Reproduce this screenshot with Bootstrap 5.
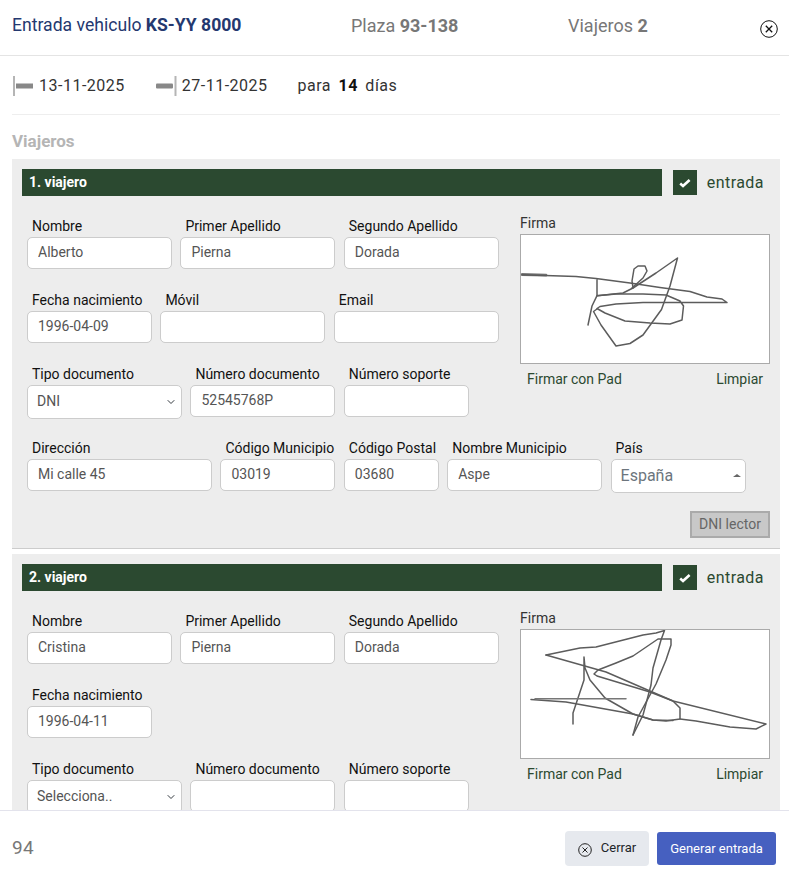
<!DOCTYPE html>
<html lang="es">
<head>
<meta charset="utf-8">
<title>Entrada vehiculo</title>
<link href="https://cdn.jsdelivr.net/npm/bootstrap@5.3.0/dist/css/bootstrap.min.css" rel="stylesheet">
<style>
html,body{height:100%;overflow:hidden;background:#fff}
body{font-family:Roboto,"Liberation Sans",sans-serif;font-size:14px;color:#212529}
.ventana{height:880px;width:789px;border:0;border-radius:0}
.cabecera{height:56px;padding:0 0 4px 12px;border-bottom:1px solid #e4e4e4;font-size:18px;flex:none}
.cab-titulo{width:339px;color:#24386f;font-size:17.6px}
.cab-plaza{width:217px;color:#777}
.cab-viajeros{width:192px;color:#777}
.cab-cerrar{width:18px;background:none;border:0;padding:0;line-height:0;margin-top:6px}
.cuerpo{flex:1;overflow:hidden;padding:0 9px 0 12px;min-height:0}
.fechas{height:59px;border-bottom:1px solid #eee;font-size:16px;letter-spacing:.5px;color:#333;padding-top:1px}
.fecha-a{margin-right:31px}
.fecha-b{margin-right:30px;margin-left:5px}
.marca{display:block;width:21px;height:20px;flex:none;margin-right:6px}
.marca-fin{margin-right:0}
.dias b{margin:0 3px;color:#111}
.rotulo{font-size:17px;font-weight:700;color:#b5b5b5;margin:16px 0 7px;line-height:21px}
.viajero{background:#ededed;padding:10px;border-bottom:1px solid #ccc;margin-bottom:5px}
.barra-fila{height:27px;padding-right:6px}
.barra{flex:1;background:#2b4930;color:#fff;font-weight:700;font-size:14px;height:27px;line-height:27px;padding-left:7px;margin-right:11px}
.marcador{width:24px;height:25px;background:#2b4930;flex:none;margin-right:10px;display:flex;align-items:center;justify-content:center}
.entrada-txt{font-size:16px;color:#2b4930;letter-spacing:.45px}
.zona{margin-top:20px}
.izq{width:477px;padding-left:5px}
.firma{width:250px;margin-left:21px;margin-top:-3px}
.firma-tit{line-height:20px;color:#333;height:20px;margin-bottom:1px}
.lienzo{display:block;width:250px;height:130px;background:#fff;border:1px solid #aaa}
.firma-acc{padding:0 7px;margin-top:6px;color:#2b4930;line-height:18px}
.fila{display:flex;gap:8.4px;height:74px;align-items:flex-start}
.fila-fin{height:73px;padding-left:5px}
.etq{display:block;margin:0 0 0 5px;line-height:21px;height:21px;white-space:nowrap;color:#111}
.w95{width:95px}.w115{width:115px}.w125{width:125px}.w135{width:135px}.w145{width:145px}.w155{width:155px}.w165{width:165px}.w185{width:185px}
.campo{height:32px;font-size:14px;color:#555;padding:0 10px 2px;border-color:#ccc;border-radius:5px;background-color:#fff}
.campo-sel{height:34px;font-size:14px;color:#555;padding:0 24px 1px 9px;border-color:#ccc;border-radius:5px;background-position:right 5px center;background-size:10px 8px}
.pais-sel{height:34px;font-size:16px;color:#6c757d;padding:0 24px 0 9px;border-color:#ccc;border-radius:5px;background-image:linear-gradient(#fff,#fff);background-size:0 0}
.pais-caja{position:relative}
.pais-flecha{position:absolute;right:5px;top:36px;width:0;height:0;border:4px solid transparent;border-top:0;border-bottom:3px solid #666;pointer-events:none}
.lector{width:80px;height:27px;padding:0;background:#c8c8c8;border:2px solid #aaa;border-radius:0;font-size:14px;color:#666;line-height:21px}
.pie{height:70px;padding:6px 13px 0 12px;border-top:1px solid #e3e3ec;flex:none}
.contador{font-size:19px;color:#777;letter-spacing:.3px}
.btn-cerrar{width:84px;height:35px;background:#e6e9ee;border:0;border-radius:4px;font-size:13px;color:#212529;padding:0;gap:9px}
.btn-cerrar svg{margin-top:3px}
.btn-cerrar span{margin-bottom:1px}
.btn-generar{width:119px;height:33px;background:#4660c0;border:0;border-radius:3px;font-size:13px;font-weight:400;color:#fff;padding:0;margin-left:8px}
</style>
</head>
<body>
<div class="modal-content ventana d-flex flex-column">
  <div class="cabecera d-flex align-items-center">
    <div class="cab-titulo">Entrada vehiculo <b>KS-YY 8000</b></div>
    <div class="cab-plaza">Plaza <b>93-138</b></div>
    <div class="cab-viajeros">Viajeros <b>2</b></div>
    <button class="cab-cerrar" type="button" aria-label="Cerrar"><svg width="18" height="18" viewBox="0 0 18 18" fill="none" stroke="#111"><circle cx="9" cy="9" r="8.300"/><path d="M5.800 5.800l6.400 6.400M12.200 5.800l-6.400 6.400" stroke-width="1.300"/></svg></button>
  </div>

  <div class="cuerpo">
    <div class="fechas d-flex align-items-center">
      <svg class="marca" viewBox="0 0 21 20"><rect x="1" y="0" width="2" height="20" fill="#b5b5b5"/><rect x="4" y="7.500" width="17" height="5" fill="#888"/></svg>
      <span class="fecha-a">13-11-2025</span>
      <svg class="marca marca-fin" viewBox="0 0 21 20"><rect x="0" y="7.500" width="17" height="5" rx="1" fill="#888"/><rect x="18.500" y="0" width="2" height="20" fill="#b5b5b5"/></svg>
      <span class="fecha-b">27-11-2025</span>
      <span class="dias">para <b>14</b> días</span>
    </div>
    <div class="rotulo">Viajeros</div>

    <section class="viajero">
      <div class="barra-fila d-flex align-items-center">
        <div class="barra">1. viajero</div>
        <div class="marcador"><svg width="12" height="10" viewBox="0 0 12 10"><path d="M1.200 5.600L4 8 10.600 2" fill="none" stroke="#fff" stroke-width="2.600"/></svg></div>
        <span class="entrada-txt">entrada</span>
      </div>
      <div class="zona d-flex">
        <div class="izq">
          <div class="fila">
            <div class="w145"><label class="etq">Nombre</label><input class="form-control campo" value="Alberto"></div>
            <div class="w155"><label class="etq">Primer Apellido</label><input class="form-control campo" value="Pierna"></div>
            <div class="w155"><label class="etq">Segundo Apellido</label><input class="form-control campo" value="Dorada"></div>
          </div>
          <div class="fila">
            <div class="w125"><label class="etq">Fecha nacimiento</label><input class="form-control campo" value="1996-04-09"></div>
            <div class="w165"><label class="etq">Móvil</label><input class="form-control campo"></div>
            <div class="w165"><label class="etq">Email</label><input class="form-control campo"></div>
          </div>
          <div class="fila">
            <div class="w155"><label class="etq">Tipo documento</label><select class="form-select campo-sel"><option>DNI</option></select></div>
            <div class="w145"><label class="etq">Número documento</label><input class="form-control campo" value="52545768P"></div>
            <div class="w125"><label class="etq">Número soporte</label><input class="form-control campo"></div>
          </div>
        </div>
        <div class="firma">
          <div class="firma-tit">Firma</div>
          <svg class="lienzo" viewBox="1 1 248 128" fill="none" stroke="#5c5c5c" stroke-width="1.500" stroke-linejoin="round" stroke-linecap="round">
            <path d="M2 40.500L26 41.200" stroke-width="2.800" stroke="#777"/>
            <path d="M2 40.700L56 42.500 76 44.500 110 49 140 53.500 170 57.500 187 63 202 65 207 68.500H163L123 68.500 96 70 80 72.500 77 74.500 85 79 105 87 130 89 150 90 162 86 163.500 72 160 67 146 61 123 60 96 60 77 61.700V45M77 61.700L72 72 68 91"/>
            <path d="M77 75L73.500 77.500 81 91 96 112 110 109.500 123 101 141.500 75.500 150 52 157.500 24 136 39 113 54 103 59 77 61.700"/>
            <path d="M113 54L112 47 114 35 118 32 125 32 127 37 123 44 112 54"/>
          </svg>
          <div class="firma-acc d-flex justify-content-between"><span>Firmar con Pad</span><span>Limpiar</span></div>
        </div>
      </div>
      <div class="fila fila-fin">
        <div class="w185"><label class="etq">Dirección</label><input class="form-control campo" value="Mi calle 45"></div>
        <div class="w115"><label class="etq">Código Municipio</label><input class="form-control campo" value="03019"></div>
        <div class="w95"><label class="etq">Código Postal</label><input class="form-control campo" value="03680"></div>
        <div class="w155"><label class="etq">Nombre Municipio</label><input class="form-control campo" value="Aspe"></div>
        <div class="w135 pais-caja"><label class="etq">País</label><select class="form-select pais-sel"><option>España</option></select><span class="pais-flecha"></span></div>
      </div>
      <div class="d-flex justify-content-end"><button class="btn lector" type="button">DNI lector</button></div>
    </section>

    <section class="viajero">
      <div class="barra-fila d-flex align-items-center">
        <div class="barra">2. viajero</div>
        <div class="marcador"><svg width="12" height="10" viewBox="0 0 12 10"><path d="M1.200 5.600L4 8 10.600 2" fill="none" stroke="#fff" stroke-width="2.600"/></svg></div>
        <span class="entrada-txt">entrada</span>
      </div>
      <div class="zona d-flex">
        <div class="izq">
          <div class="fila">
            <div class="w145"><label class="etq">Nombre</label><input class="form-control campo" value="Cristina"></div>
            <div class="w155"><label class="etq">Primer Apellido</label><input class="form-control campo" value="Pierna"></div>
            <div class="w155"><label class="etq">Segundo Apellido</label><input class="form-control campo" value="Dorada"></div>
          </div>
          <div class="fila">
            <div class="w125"><label class="etq">Fecha nacimiento</label><input class="form-control campo" value="1996-04-11"></div>
          </div>
          <div class="fila">
            <div class="w155"><label class="etq">Tipo documento</label><select class="form-select campo-sel"><option>Selecciona..</option></select></div>
            <div class="w145"><label class="etq">Número documento</label><input class="form-control campo"></div>
            <div class="w125"><label class="etq">Número soporte</label><input class="form-control campo"></div>
          </div>
        </div>
        <div class="firma">
          <div class="firma-tit">Firma</div>
          <svg class="lienzo" viewBox="1 1 248 128" fill="none" stroke="#5c5c5c" stroke-width="1.500" stroke-linejoin="round" stroke-linecap="round">
            <path d="M26 26L60 19 76 18 123 6 136 4 144.500 1.500 141 11 133 39 131 56 123 86 113 106"/>
            <path d="M113 106L118 88 136 55 146 31 151 16 151 10 138 10 113 27 96 34 78 41 74 45 77 47 130 63 153 72 160 79V90L146 92 133 91 113 85 85 69 70 51 65 39 64 28V51L58 69 53 84V95"/>
            <path d="M26 26L86 43 123 59 153 72 246 95 236 100 210 98 176 92 160 90"/>
            <path d="M11 70.500L46 73 113 85 123 88 133 91 153 91.500"/>
            <path d="M15 69.700H106" stroke="#777"/>
          </svg>
          <div class="firma-acc d-flex justify-content-between"><span>Firmar con Pad</span><span>Limpiar</span></div>
        </div>
      </div>
    </section>
  </div>

  <div class="pie d-flex align-items-center justify-content-between">
    <div class="contador">94</div>
    <div class="d-flex align-items-center">
      <button class="btn btn-cerrar d-flex align-items-center justify-content-center" type="button"><svg width="14" height="14" viewBox="0 0 14 14" fill="none" stroke="#222"><circle cx="7" cy="7" r="6.300"/><path d="M4.500 4.500l5 5M9.500 4.500l-5 5"/></svg><span>Cerrar</span></button>
      <button class="btn btn-generar" type="button">Generar entrada</button>
    </div>
  </div>
</div>
<script src="https://cdn.jsdelivr.net/npm/bootstrap@5.3.0/dist/js/bootstrap.bundle.min.js"></script>
</body>
</html>
